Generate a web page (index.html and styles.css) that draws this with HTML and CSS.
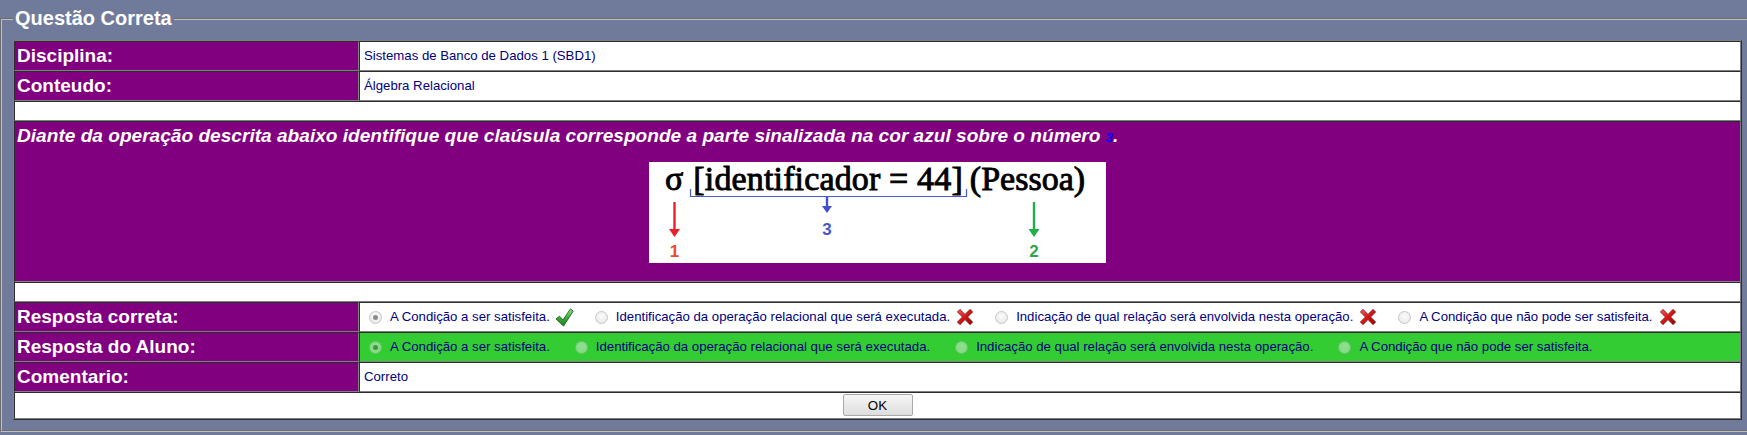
FILE: index.html
```html
<!DOCTYPE html>
<html lang="pt">
<head>
<meta charset="utf-8">
<title>Questão Correta</title>
<link rel="stylesheet" href="styles.css">
</head>
<body class="page">
<fieldset class="box">
  <legend class="box-title">Questão Correta</legend>
  <table class="grid">
    <colgroup><col class="col-label"><col></colgroup>
    <tr>
      <td class="label">Disciplina:</td>
      <td class="value">Sistemas de Banco de Dados 1 (SBD1)</td>
    </tr>
    <tr>
      <td class="label">Conteudo:</td>
      <td class="value">Álgebra Relacional</td>
    </tr>
    <tr><td class="blank" colspan="2"><div class="blank-fill"></div></td></tr>
    <tr>
      <td class="question" colspan="2">
        <div class="question-text">Diante da operação descrita abaixo identifique que claúsula corresponde a parte sinalizada na cor azul sobre o número <span class="question-num">3</span>.</div>
        <div class="figure">
          <div class="figure-card">
            <div class="fig-line">
              <span class="fig-sigma">σ</span>
              <span class="fig-cond">[identificador = 44]</span>
              <span class="fig-rel">(Pessoa)</span>
            </div>
            <svg class="figure-svg" width="457" height="101" viewBox="0 0 457 101" xmlns="http://www.w3.org/2000/svg">
              <path d="M41.5 27 V34.5 H317.5 V27" fill="none" stroke="#4a5ad0" stroke-width="1.2"/>
              <line x1="178" y1="34.5" x2="178" y2="46" stroke="#4050cc" stroke-width="2.4"/>
              <polygon points="173,44 183,44 178,51" fill="#4050cc"/>
              <text x="178" y="73" class="fig-num" fill="#4a57c8">3</text>
              <line x1="25.5" y1="40" x2="25.5" y2="69" stroke="#e8202a" stroke-width="2.4"/>
              <polygon points="20,67 31,67 25.5,75" fill="#e8202a"/>
              <text x="25.5" y="95" class="fig-num" fill="#e84a2a">1</text>
              <line x1="385" y1="40" x2="385" y2="69" stroke="#1fae48" stroke-width="2.4"/>
              <polygon points="379.5,67 390.5,67 385,75" fill="#1fae48"/>
              <text x="385" y="95" class="fig-num" fill="#2aa84a">2</text>
            </svg>
          </div>
        </div>
      </td>
    </tr>
    <tr><td class="blank" colspan="2"><div class="blank-fill"></div></td></tr>
    <tr>
      <td class="label">Resposta correta:</td>
      <td class="value">
        <div class="options">
          <span class="opt opt-marked"><span class="radio radio-on"></span>A Condição a ser satisfeita.<svg class="mark mark-ok" width="19" height="19" viewBox="0 0 20 20"><defs><linearGradient id="gck" x1="0" y1="0" x2="0" y2="1"><stop offset="0" stop-color="#8ee08e"/><stop offset="0.55" stop-color="#3aa83a"/><stop offset="1" stop-color="#17801a"/></linearGradient></defs><path d="M1 11.5 L4.8 8.6 L8.4 12.6 L16.2 1 L19.2 3.2 L9 19 Z" fill="url(#gck)" stroke="#145e16" stroke-width="0.9" stroke-linejoin="round"/></svg></span>
          <span class="opt opt-marked"><span class="radio"></span>Identificação da operação relacional que será executada.<svg class="mark mark-bad" width="18" height="18" viewBox="0 0 20 20"><defs><linearGradient id="gx1" x1="0" y1="0" x2="1" y2="1"><stop offset="0" stop-color="#f66060"/><stop offset="0.5" stop-color="#d51515"/><stop offset="1" stop-color="#9a0000"/></linearGradient></defs><path d="M1.5 4.4 L4.4 1.5 L10 7.1 L15.6 1.5 L18.5 4.4 L12.9 10 L18.5 15.6 L15.6 18.5 L10 12.9 L4.4 18.5 L1.5 15.6 L7.1 10 Z" fill="url(#gx1)" stroke="#6e0808" stroke-width="0.8" stroke-linejoin="round"/></svg></span>
          <span class="opt opt-marked"><span class="radio"></span>Indicação de qual relação será envolvida nesta operação.<svg class="mark mark-bad" width="18" height="18" viewBox="0 0 20 20"><path d="M1.5 4.4 L4.4 1.5 L10 7.1 L15.6 1.5 L18.5 4.4 L12.9 10 L18.5 15.6 L15.6 18.5 L10 12.9 L4.4 18.5 L1.5 15.6 L7.1 10 Z" fill="url(#gx1)" stroke="#6e0808" stroke-width="0.8" stroke-linejoin="round"/></svg></span>
          <span class="opt opt-marked"><span class="radio"></span>A Condição que não pode ser satisfeita.<svg class="mark mark-bad" width="18" height="18" viewBox="0 0 20 20"><path d="M1.5 4.4 L4.4 1.5 L10 7.1 L15.6 1.5 L18.5 4.4 L12.9 10 L18.5 15.6 L15.6 18.5 L10 12.9 L4.4 18.5 L1.5 15.6 L7.1 10 Z" fill="url(#gx1)" stroke="#6e0808" stroke-width="0.8" stroke-linejoin="round"/></svg></span>
        </div>
      </td>
    </tr>
    <tr>
      <td class="label">Resposta do Aluno:</td>
      <td class="value value-ok">
        <div class="options">
          <span class="opt"><span class="radio radio-dim radio-on"></span>A Condição a ser satisfeita.</span>
          <span class="opt"><span class="radio radio-dim"></span>Identificação da operação relacional que será executada.</span>
          <span class="opt"><span class="radio radio-dim"></span>Indicação de qual relação será envolvida nesta operação.</span>
          <span class="opt"><span class="radio radio-dim"></span>A Condição que não pode ser satisfeita.</span>
        </div>
      </td>
    </tr>
    <tr>
      <td class="label">Comentario:</td>
      <td class="value">Correto</td>
    </tr>
    <tr>
      <td class="actions" colspan="2"><button class="btn" type="button">OK</button></td>
    </tr>
  </table>
</fieldset>
</body>
</html>
```

FILE: styles.css
```css
html, body {
  margin: 0;
  padding: 0;
}
.page {
  background: #707b9c;
  overflow: hidden;
  font-family: "Liberation Sans", Arial, sans-serif;
}
.box {
  margin: 7px 0 0 0;
  padding: 10px 11px 10px 11px;
  border: 2px groove #c0c0c0;
  width: 1729px;
}
.box-title {
  color: #ffffff;
  font-weight: bold;
  font-size: 20px;
  line-height: 23px;
  padding: 0 2px;
}
.grid {
  width: 1729px;
  table-layout: fixed;
  border-collapse: separate;
  border-spacing: 0;
  border: 1px outset #808080;
  background: #ffffff;
}
.col-label {
  width: 345px;
}
.grid td {
  border: 1px inset #808080;
  padding: 3px 2px;
  vertical-align: middle;
}
.label {
  background: #800080;
  color: #ffffff;
  font-weight: bold;
  font-size: 19px;
  line-height: 22px;
}
.grid td.value {
  background: #ffffff;
  color: #000080;
  font-size: 13.2px;
  line-height: 22px;
  padding-left: 4px;
}
.grid td.value-ok {
  background: #33cc33;
}
.grid td.blank {
  padding: 0;
}
.blank-fill {
  height: 18px;
}
.question {
  background: #800080;
  color: #ffffff;
}
.question-text {
  font-weight: bold;
  font-style: italic;
  font-size: 19.1px;
  line-height: 22px;
}
.question-num {
  color: #0000ff;
  font-size: 13px;
}
.figure {
  display: flex;
  justify-content: center;
  margin: 13px 0 15px 0;
}
.figure-card {
  position: relative;
  width: 457px;
  height: 101px;
  background: #ffffff;
}
.fig-line {
  position: absolute;
  left: 0;
  top: 0;
  display: flex;
  align-items: baseline;
  height: 34px;
  font-family: "Liberation Serif", "Times New Roman", serif;
  font-size: 34px;
  line-height: 34px;
  color: #000000;
  -webkit-text-stroke: 0.9px #000000;
  white-space: nowrap;
}
.fig-sigma {
  margin-left: 16px;
}
.fig-cond {
  margin-left: 10px;
  letter-spacing: 0.15px;
}
.fig-rel {
  margin-left: 7px;
}
.figure-svg {
  display: block;
}
.fig-num {
  font-family: "Liberation Sans", Arial, sans-serif;
  font-weight: bold;
  font-size: 17px;
  text-anchor: middle;
}
.options {
  display: flex;
  align-items: center;
  white-space: nowrap;
}
.opt {
  display: flex;
  align-items: center;
  margin-right: 20px;
}
.opt-marked {
  margin-right: 16px;
}
.radio {
  display: inline-block;
  box-sizing: border-box;
  width: 13px;
  height: 13px;
  margin: 1px 8px 0 5px;
  border-radius: 50%;
  border: 1px solid #c6c6c6;
  background: radial-gradient(circle at 50% 40%, #fbfbfb 0%, #ececec 70%, #e2e2e2 100%);
  position: relative;
  flex: none;
}
.radio-on::after {
  content: "";
  position: absolute;
  left: 3px;
  top: 3px;
  width: 5px;
  height: 5px;
  border-radius: 50%;
  background: #8c8c8c;
}
.radio-dim {
  opacity: 0.45;
  border-color: #b8b8b8;
}
.radio-dim.radio-on::after {
  background: #555555;
}
.mark {
  display: block;
  flex: none;
}
.mark-ok {
  margin-left: 5px;
}
.mark-bad {
  margin-left: 6px;
}
.grid td.actions {
  background: #ffffff;
  text-align: center;
  padding: 1px 2px 2px;
}
.btn {
  width: 70px;
  height: 22px;
  font-family: "Liberation Sans", Arial, sans-serif;
  font-size: 13.33px;
  color: #000000;
  background: linear-gradient(#f6f6f6, #dedede);
  border: 1px solid #a9a9a9;
  border-radius: 2px;
  padding: 0;
}
```
